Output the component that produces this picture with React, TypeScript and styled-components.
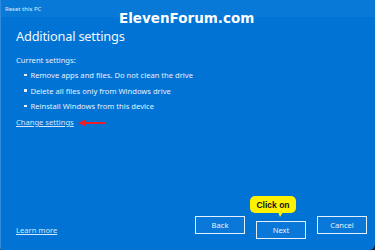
import styled, { createGlobalStyle } from 'styled-components';

const GlobalStyle = createGlobalStyle`
    html, body, #root {
        margin: 0;
        padding: 0;
        height: 100%;
    }
    html, body {
        background: #1b2230;
    }
    body {
        font-family: "Noto Sans", "Open Sans", sans-serif;
    }
`;

const settings = [
    'Remove apps and files. Do not clean the drive',
    'Delete all files only from Windows drive',
    'Reinstall Windows from this device',
];

export default function App() {
    return (
        <>
            <GlobalStyle />
            <Window>
                <TitleBar>
                    <TitleText>Reset this PC</TitleText>
                    <Watermark>ElevenForum.com</Watermark>
                </TitleBar>
                <Body>
                    <Heading>Additional settings</Heading>
                    <Label>Current settings:</Label>
                    <List>
                        {settings.map((item) => (
                            <Item key={item}>{item}</Item>
                        ))}
                    </List>
                    <LinkRow>
                        <Link>Change settings</Link>
                        <svg width="29" height="8" viewBox="0 0 29 8">
                            <path d="M1 4 L9 0.3 L8 3.1 L28 3.1 L28 4.9 L8 4.9 L9 7.7 Z" fill="#e8202a" />
                        </svg>
                    </LinkRow>
                </Body>
                <Footer>
                    <Link>Learn more</Link>
                    <Buttons>
                        <Button>Back</Button>
                        <NextWrap>
                            <Callout>Click on</Callout>
                            <Button>Next</Button>
                        </NextWrap>
                        <Button>Cancel</Button>
                    </Buttons>
                </Footer>
            </Window>
        </>
    );
}

const Window = styled.div`
    width: 375px;
    height: 100%;
    box-sizing: border-box;
    background: #0073d5;
    border-radius: 0 5px 6px 2px;
    border-left: 1px solid #2f8bdc;
    display: flex;
    flex-direction: column;
    color: #ffffff;
`;

const TitleBar = styled.header`
    height: 17px;
    flex-shrink: 0;
    background: #0979d7;
    position: relative;
    display: flex;
    align-items: center;
    padding-left: 4px;
`;

const TitleText = styled.span`
    font-size: 6px;
    color: #dfecf9;
`;

const Watermark = styled.span`
    position: absolute;
    left: 118px;
    top: 10px;
    font-family: "DejaVu Sans", "Liberation Sans", sans-serif;
    font-weight: bold;
    font-size: 13.5px;
    line-height: 16px;
    color: #ffffff;
`;

const Body = styled.div`
    padding: 9px 0 0 15px;
    display: flex;
    flex-direction: column;
`;

const Heading = styled.h1`
    margin: 0;
    font-weight: 400;
    font-size: 12.8px;
    line-height: 20px;
    letter-spacing: -0.2px;
    color: #f2f7fd;
`;

const Label = styled.div`
    margin-top: 8px;
    font-size: 7.6px;
    line-height: 12px;
    color: #e8f1fb;
`;

const List = styled.ul`
    margin: 3px 0 0;
    padding: 0 0 0 8px;
    list-style: none;
    display: flex;
    flex-direction: column;
    gap: 3.5px;
`;

const Item = styled.li`
    font-size: 7.6px;
    line-height: 12px;
    color: #e8f1fb;
    display: flex;
    align-items: center;
    gap: 4px;

    &::before {
        content: '';
        width: 2.5px;
        height: 2.5px;
        background: #e8f1fb;
    }
`;

const LinkRow = styled.div`
    margin-top: 4px;
    display: flex;
    align-items: center;
    gap: 3px;

    svg {
        margin-top: 2px;
    }
`;

const Link = styled.span`
    font-size: 7.6px;
    line-height: 12px;
    color: #d4e8fb;
    text-decoration: underline;
`;

const Footer = styled.div`
    margin-top: auto;
    padding: 0 8px 11px 15px;
    display: flex;
    align-items: flex-end;
    justify-content: space-between;

    & > span {
        margin-bottom: 3px;
    }
`;

const Buttons = styled.div`
    display: flex;
    gap: 11px;
`;

const NextWrap = styled.div`
    position: relative;
`;

const Button = styled.button`
    width: 50px;
    height: 18px;
    box-sizing: border-box;
    border: 1.5px solid #e6f0fb;
    background: #0a78d8;
    color: #e8f1fb;
    font-family: "Noto Sans", "Open Sans", sans-serif;
    font-size: 7.6px;
    padding: 0;
`;

const Callout = styled.div`
    position: absolute;
    left: -6px;
    bottom: 26px;
    width: 46px;
    height: 17px;
    box-sizing: border-box;
    background: #fff200;
    border-radius: 5px;
    color: #111111;
    font-family: "Liberation Sans", Arial, sans-serif;
    font-weight: bold;
    font-size: 8.5px;
    display: flex;
    align-items: center;
    justify-content: center;

    &::after {
        content: '';
        position: absolute;
        right: 13px;
        bottom: -4px;
        border-left: 2px solid transparent;
        border-right: 3px solid transparent;
        border-top: 5px solid #fff200;
    }
`;
